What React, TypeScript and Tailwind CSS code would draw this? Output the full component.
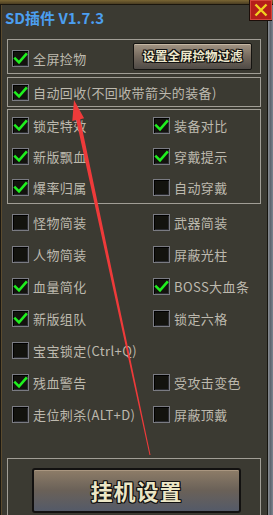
import React from "react";

const font = { fontFamily: '"Noto Sans CJK SC", "Noto Sans", sans-serif' };

function Box({ checked }: { checked: boolean }) {
  return (
    <div className="w-[17px] h-[17px] shrink-0 border border-[#7a7b82] bg-[#13130e] shadow-[inset_1px_1px_0_#000,inset_-1px_-1px_0_#2a2b30] flex items-center justify-center">
      {checked && (
        <svg width="15" height="15" viewBox="0 0 15 15">
          <path d="M2.2 7.6 L6 11.4 L13 3.4" fill="none" stroke="#1ff01f" strokeWidth="2.6" strokeLinecap="square" />
        </svg>
      )}
    </div>
  );
}

function Opt({ label, checked }: { label: string; checked: boolean }) {
  return (
    <div className="flex items-center gap-[4px]">
      <Box checked={checked} />
      <span className="text-[13px] leading-[17px] text-[#bdb9ae] whitespace-nowrap tracking-[0.4px]">{label}</span>
    </div>
  );
}

const outline =
  "[text-shadow:1px_1px_0_#111,-1px_-1px_0_#111,1px_-1px_0_#111,-1px_1px_0_#111,0_1px_0_#111,0_-1px_0_#111,1px_0_0_#111,-1px_0_0_#111]";

export default function App() {
  const boxed: [string, boolean, string, boolean][] = [
    ["锁定特效", true, "装备对比", true],
    ["新版飘血", true, "穿戴提示", true],
    ["爆率归属", true, "自动穿戴", false],
  ];
  const rows: [string, boolean, string | null, boolean][] = [
    ["怪物简装", false, "武器简装", false],
    ["人物简装", false, "屏蔽光柱", false],
    ["血量简化", true, "BOSS大血条", true],
    ["新版组队", true, "锁定六格", false],
    ["宝宝锁定(Ctrl+Q)", false, null, false],
    ["残血警告", true, "受攻击变色", false],
    ["走位刺杀(ALT+D)", false, "屏蔽顶戴", false],
  ];
  return (
    <div className="relative w-[273px] h-[515px] overflow-hidden bg-[#3b3a32] flex flex-col" style={font}>
      <div className="h-[5px] shrink-0 bg-gradient-to-b from-[#7a6634] to-[#4a3d22] border-b border-[#1a160e]" />
      <div className="flex flex-1 min-h-0 overflow-hidden">
        <div className="w-[2px] shrink-0 bg-[#1a1812] border-r border-[#5a4a2e]" />
        <div className="flex-1 flex flex-col pl-[5px] min-w-0">
          <div className="h-[34px] shrink-0 pt-[3px] -ml-[2px] text-[15px] leading-[20px] font-bold text-[#4c9ff0] whitespace-nowrap">
            SD插件 V1.7.3
          </div>
          <div className="w-[254px] h-[35px] shrink-0 border border-[#a19e96] flex items-center justify-between pl-[4px] pr-[8px]">
            <div className="mt-[3px]">
              <Opt label="全屏捡物" checked />
            </div>
            <div className="w-[119px] h-[27px] border border-[#151411] rounded-[2px] bg-gradient-to-b from-[#a39584] via-[#756a5e] to-[#4f4a46] shadow-[inset_0_1px_0_#c5b8a4] flex items-center justify-center">
              <span className={`text-[12.5px] font-bold text-[#eee8cc] ${outline} whitespace-nowrap`}>设置全屏捡物过滤</span>
            </div>
          </div>
          <div className="mt-[3px] w-[254px] h-[30px] shrink-0 border border-[#a19e96] flex items-center pl-[4px]">
            <Opt label="自动回收(不回收带箭头的装备)" checked />
          </div>
          <div className="mt-[2px] w-[254px] shrink-0 border border-[#a19e96] pl-[4px]">
            {boxed.map((r, i) => (
              <div key={i} className="h-[31px] grid grid-cols-[141px_1fr] items-center">
                <Opt label={r[0]} checked={r[1]} />
                <Opt label={r[2]} checked={r[3]} />
              </div>
            ))}
          </div>
          <div className="mt-[2px] pl-[5px] shrink-0">
            {rows.map((r, i) => (
              <div key={i} className="h-[32px] grid grid-cols-[141px_1fr] items-center">
                <Opt label={r[0]} checked={r[1]} />
                {r[2] ? <Opt label={r[2]} checked={r[3]} /> : <div />}
              </div>
            ))}
          </div>
          <div className="mt-[28px] w-[254px] h-[80px] shrink-0 border border-[#a19e96] pl-[24px] pt-[9px]">
            <div className="w-[209px] h-[45px] border-2 border-[#121110] rounded-[3px] bg-gradient-to-b from-[#8e7d68] via-[#6a6158] to-[#545a68] shadow-[inset_0_1px_0_#a99680] flex items-center justify-center">
              <span className={`text-[22px] font-bold tracking-[1px] text-[#ebe6c6] ${outline}`}>挂机设置</span>
            </div>
          </div>
        </div>
        <div className="w-[6px] shrink-0 border-l border-[#16150f] bg-gradient-to-r from-[#8a8e94] via-[#5f6670] to-[#7d8590]" />
      </div>
      <div className="absolute top-0 right-[1px] w-[23px] h-[21px] bg-[#1c0f0a] pl-[1px] pb-[1px]">
        <div className="w-[22px] h-[20px] bg-[#b51e1a] border border-[#d6463a] flex items-center justify-center">
          <svg width="14" height="14" viewBox="0 0 14 14">
            <path d="M1.5 1.5 L12.5 12.5 M12.5 1.5 L1.5 12.5" stroke="#f0d020" strokeWidth="2.4" />
          </svg>
        </div>
      </div>
      <svg className="absolute inset-0 pointer-events-none" width="273" height="515" viewBox="0 0 273 515">
        <polygon
          points="74,100 84.1,118.3 80.2,119.2 150.5,455 149.5,455 76.2,120 72.3,120.9"
          fill="#ee3a3a"
        />
      </svg>
    </div>
  );
}
